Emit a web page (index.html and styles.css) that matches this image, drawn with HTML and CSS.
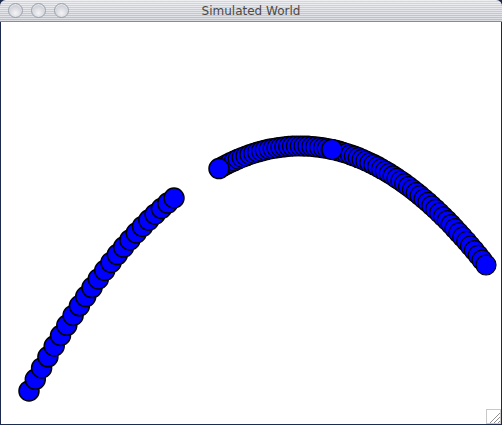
FILE: index.html
```html
<!DOCTYPE html>
<html>
<head>
<meta charset="utf-8">
<link rel="stylesheet" href="styles.css">
</head>
<body>
<div class="window">
  <div class="titlebar">
    <div class="buttons">
      <span class="btn"></span><span class="btn"></span><span class="btn"></span>
    </div>
    <div class="title">Simulated World</div>
  </div>
  <div class="content">
    <svg id="world" class="world" width="500" height="402" viewBox="1 23 500 402" xmlns="http://www.w3.org/2000/svg"></svg>
    <svg class="grip" width="15" height="15" viewBox="0 0 15 15" xmlns="http://www.w3.org/2000/svg">
      <rect x="0.5" y="0.5" width="14" height="14" fill="#fff" stroke="#c8c8c8"/>
      <line x1="4" y1="14" x2="14" y2="4" stroke="#909090" stroke-width="1"/>
      <line x1="8" y1="14" x2="14" y2="8" stroke="#909090" stroke-width="1"/>
      <line x1="12" y1="14" x2="14" y2="12" stroke="#909090" stroke-width="1"/>
    </svg>
  </div>
</div>
<script src="script.js"></script>
</body>
</html>
```
FILE: styles.css
```css
html, body {
  margin: 0;
  padding: 0;
  background: #1c2b4d;
}
.window {
  width: 502px;
  height: 425px;
  display: flex;
  flex-direction: column;
}
.titlebar {
  height: 22px;
  border-radius: 6px 6px 0 0;
  background:
    repeating-linear-gradient(to bottom, rgba(255,255,255,0.4) 0 1px, rgba(60,70,90,0.08) 1px 2px),
    linear-gradient(to bottom, #e4e5ea, #c4c7d0);
  border-bottom: 1px solid #8a8c94;
  display: flex;
  align-items: center;
  position: relative;
}
.buttons {
  display: flex;
  gap: 8px;
  padding-left: 8px;
}
.btn {
  width: 13px;
  height: 13px;
  border-radius: 50%;
  border: 1px solid #9aa0ac;
  background: radial-gradient(circle at 50% 70%, #f4f4f6 0%, #d4d6dc 55%, #b4b8c0 100%);
  box-shadow: inset 0 1px 1px rgba(255,255,255,0.7);
}
.title {
  position: absolute;
  left: 0;
  right: 0;
  top: 4px;
  text-align: center;
  font-family: "DejaVu Sans", sans-serif;
  font-size: 12px;
  color: #4a4a4a;
}
.content {
  flex: 1;
  background: #fff;
  border: 1px solid #1c2b4d;
  border-top: none;
  position: relative;
}
.world {
  display: block;
}
.grip {
  position: absolute;
  right: 0;
  bottom: 0;
}
```
FILE: script.js
```js
(function () {
  var svg = document.getElementById('world');
  var NS = 'http://www.w3.org/2000/svg';
  function dot(x, y, w) {
    var c = document.createElementNS(NS, 'circle');
    c.setAttribute('cx', x.toFixed(1));
    c.setAttribute('cy', y.toFixed(1));
    c.setAttribute('r', '10');
    c.setAttribute('fill', '#0000ff');
    c.setAttribute('stroke', '#000');
    c.setAttribute('stroke-width', w);
    svg.appendChild(c);
  }
  var i, x, n;
  n = 24;
  for (i = 0; i < n; i++) {
    x = 29 + (174 - 29) * i / (n - 1);
    dot(x, 158.2 + 0.00377 * (x - 278) * (x - 278), '1.5');
  }
  n = 70;
  for (i = 1; i < n; i++) {
    x = 219 + (486 - 219) * i / (n - 1);
    dot(x, 147 + 0.00344 * (x - 300) * (x - 300), '1.2');
  }
  dot(332, 147 + 0.00344 * 32 * 32, '1.2');
  dot(219, 147 + 0.00344 * 81 * 81, '1.5');
})();
```
